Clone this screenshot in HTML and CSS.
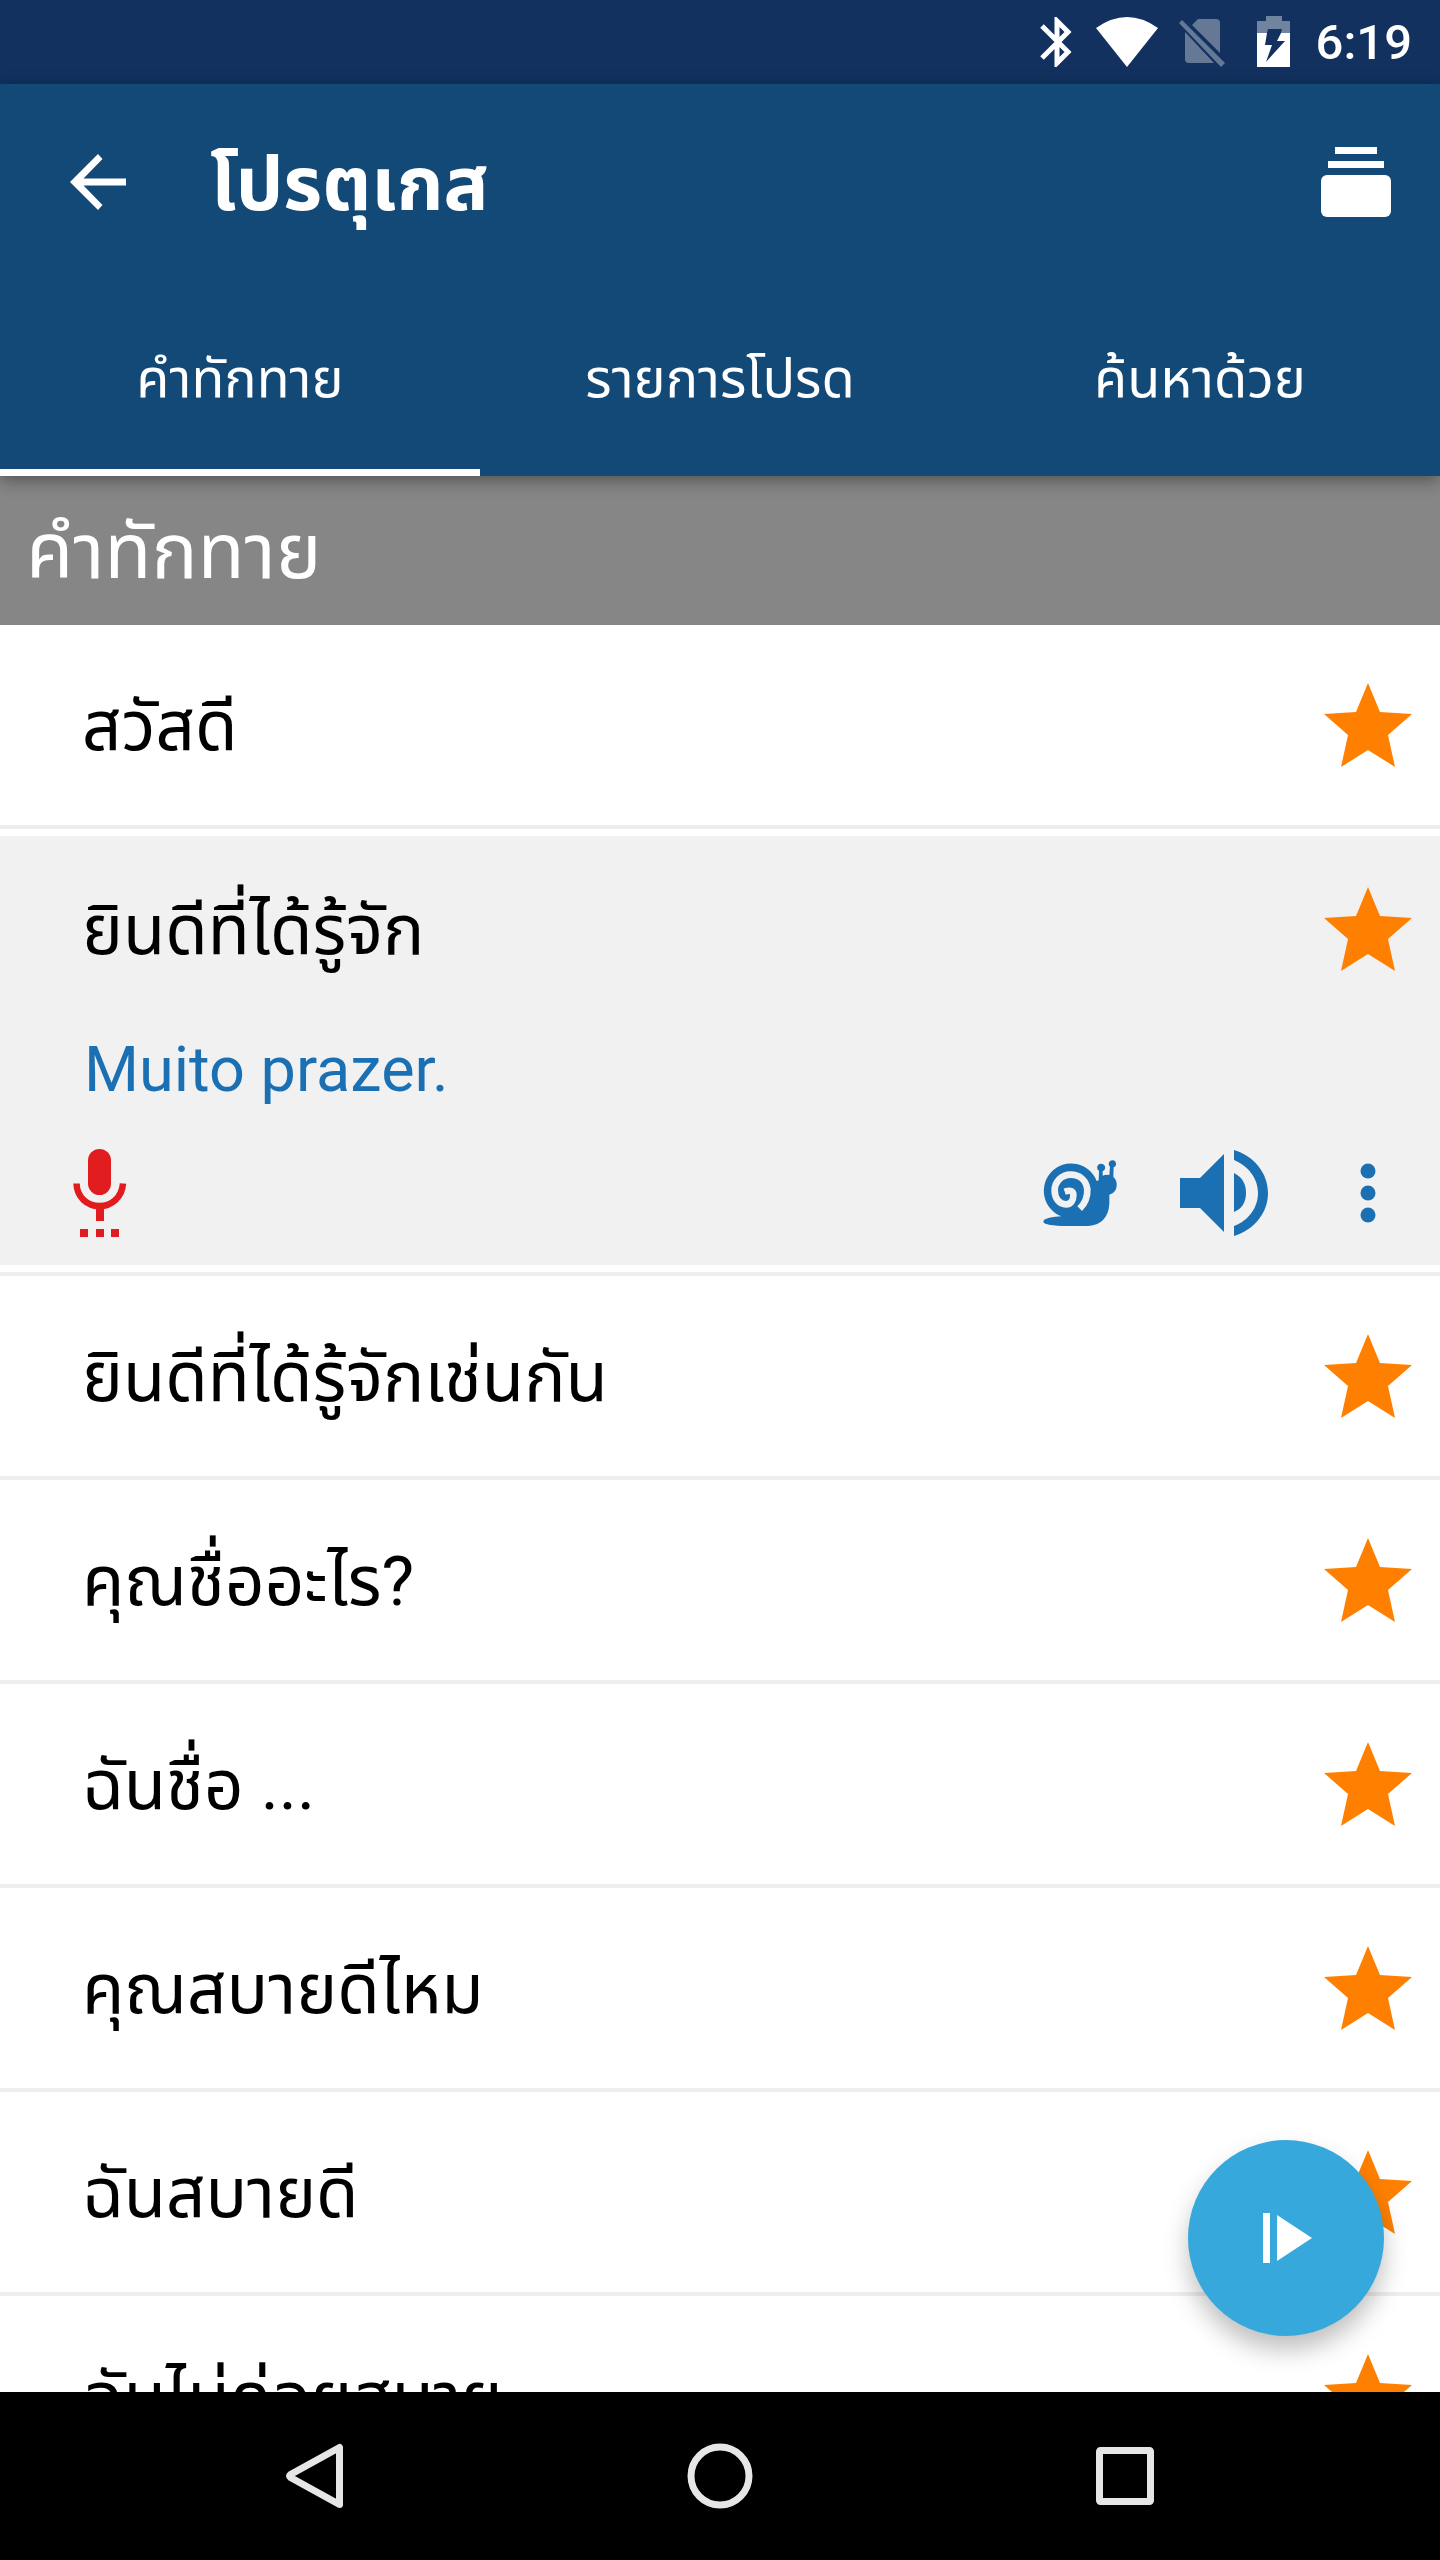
FILE: index.html
```html
<!DOCTYPE html>
<html lang="th">
<head>
<meta charset="utf-8">
<meta name="viewport" content="width=device-width, initial-scale=1">
<title>โปรตุเกส</title>
<link rel="stylesheet" href="styles.css">
</head>
<body>
<svg class="sprite" aria-hidden="true">
  <symbol id="star" viewBox="0 0 88 84">
    <path d="M44 0 56 29 88 31 64 52 71 84 44 67 17 84 24 52 0 31 32 29Z"/>
  </symbol>
</svg>
<div class="app">
  <div class="status">
    <svg class="bluetooth" width="32" height="50" viewBox="0 0 32 50" aria-hidden="true"><path d="M2 9 28 35 17 46V4L28 15 2 41" fill="none" stroke="currentColor" stroke-width="5"/></svg>
    <svg class="wifi" width="62" height="50" viewBox="0 0 62 50" aria-hidden="true"><path d="M0 11Q31-11 62 11L31 50Z"/></svg>
    <svg class="sim" width="46" height="50" viewBox="0 0 46 50" aria-hidden="true"><path d="M0 6 3 3 46 46 42 50Z M6 15 35 46H10Q6 46 6 42Z M13 8 19 2H37Q41 2 41 6V36Z"/></svg>
    <svg class="battery" width="34" height="52" viewBox="0 0 34 52" aria-hidden="true"><path opacity=".4" d="M9 0H25V5H33V17H24L25 13H11L10 17H0V5H9Z"/><path d="M0 17H10L8 29H15L9 46 28 25H20L24 17H33V51H0Z"/></svg>
    <time class="clock">6:19</time>
  </div>

  <header class="header">
    <div class="toolbar">
      <button class="icon-button" type="button" aria-label="กลับ"><svg width="56" height="56" viewBox="0 0 56 56"><path d="M56 24.500V31.500H13.500L32.500 51 28 56 0 28 28 0 32.500 5 13.500 24.500Z"/></svg></button>
      <h1 class="title">โปรตุเกส</h1>
      <button class="icon-button" type="button" aria-label="ชุดบัตรคำ"><svg width="70" height="70" viewBox="0 0 70 70"><path d="M14 0H56V7H14ZM7 14H63V21H7Z"/><rect y="28" width="70" height="42" rx="6"/></svg></button>
    </div>
    <nav class="tabs">
      <a class="tab tab-active" href="#greetings" aria-current="page">คำทักทาย</a>
      <a class="tab" href="#favorites">รายการโปรด</a>
      <a class="tab" href="#search">ค้นหาด้วย</a>
    </nav>
  </header>

  <main class="content" id="greetings">
    <h2 class="section">คำทักทาย</h2>
    <ul class="phrases">
      <li class="row"><div class="line"><button class="phrase" type="button">สวัสดี</button><button class="star" type="button" aria-label="รายการโปรด"><svg width="88" height="84"><use href="#star"/></svg></button></div></li>
      <li class="row row-open">
        <div class="detail">
          <div class="line"><button class="phrase" type="button" aria-expanded="true">ยินดีที่ได้รู้จัก</button><button class="star" type="button" aria-label="รายการโปรด"><svg width="88" height="84"><use href="#star"/></svg></button></div>
          <p class="translation" lang="pt">Muito prazer.</p>
          <div class="actions">
            <button class="record" type="button" aria-label="บันทึกเสียง"><svg width="54" height="88" viewBox="0 0 54 88"><rect x="15" width="23" height="46" rx="11.500"/><path d="M3.500 34.500C4 48 14 57 26.500 57S49 48 50 34.500" fill="none" stroke="currentColor" stroke-width="6.500"/><path d="M23 58H31V72H23ZM7 80H15V88H7ZM23 80H31V88H23ZM38 80H46V88H38Z"/></svg></button>
            <button class="slow" type="button" aria-label="เล่นช้า"><svg width="74" height="66" viewBox="129 180 222 198"><path d="M130 365C131 354 160 351 184 349A82 82 0 1 1 290 243L296 241 297 213A12 12 0 1 1 308 214V227Q317 223 328 225L330 200A11 11 0 1 1 341 202L340 231Q351 240 350 256C350 271 340 281 328 284V310C327 350 305 376 265 378H200C160 377 131 374 130 365Z"/><path d="M239 326C258 307 263 288 262 268C258 240 238 224 212 224C184 224 164 246 164 271C164 296 178 313 198 313C214 313 220 300 220 286C220 273 212 269 194 275" class="snail-spiral"/></svg></button>
            <button class="play" type="button" aria-label="เล่นเสียง"><svg width="88" height="86" viewBox="0 0 88 86"><path d="M0 28H20L44 4V82L20 58H0ZM54 23Q66 29 66 43T54 62ZM54 0C74 6 88 23 88 43S74 80 54 86V76C68 71 78 58 78 43S68 16 54 10Z"/></svg></button>
            <button class="more" type="button" aria-label="เพิ่มเติม"><svg width="16" height="60" viewBox="0 0 16 60"><circle cx="8" cy="8" r="7.500"/><circle cx="8" cy="30" r="7.500"/><circle cx="8" cy="52" r="7.500"/></svg></button>
          </div>
        </div>
      </li>
      <li class="row"><div class="line"><button class="phrase" type="button">ยินดีที่ได้รู้จักเช่นกัน</button><button class="star" type="button" aria-label="รายการโปรด"><svg width="88" height="84"><use href="#star"/></svg></button></div></li>
      <li class="row"><div class="line"><button class="phrase" type="button">คุณชื่ออะไร?</button><button class="star" type="button" aria-label="รายการโปรด"><svg width="88" height="84"><use href="#star"/></svg></button></div></li>
      <li class="row"><div class="line"><button class="phrase" type="button">ฉันชื่อ ...</button><button class="star" type="button" aria-label="รายการโปรด"><svg width="88" height="84"><use href="#star"/></svg></button></div></li>
      <li class="row"><div class="line"><button class="phrase" type="button">คุณสบายดีไหม</button><button class="star" type="button" aria-label="รายการโปรด"><svg width="88" height="84"><use href="#star"/></svg></button></div></li>
      <li class="row"><div class="line"><button class="phrase" type="button">ฉันสบายดี</button><button class="star" type="button" aria-label="รายการโปรด"><svg width="88" height="84"><use href="#star"/></svg></button></div></li>
      <li class="row"><div class="line"><button class="phrase" type="button">ฉันไม่ค่อยสบาย</button><button class="star" type="button" aria-label="รายการโปรด"><svg width="88" height="84"><use href="#star"/></svg></button></div></li>
    </ul>
    <button class="fab" type="button" aria-label="เล่นทั้งหมด"><svg width="50" height="50" viewBox="0 0 50 50"><path d="M0 0H7V50H0ZM14 2 49 25 14 48Z"/></svg></button>
  </main>

  <nav class="system">
    <button type="button" aria-label="ย้อนกลับ"><svg width="58" height="66" viewBox="0 0 58 66"><path d="M53.500 4.500V61.500L4.500 34.500Q2.500 33 4.500 31.500Z"/></svg></button>
    <button type="button" aria-label="หน้าหลัก"><svg width="66" height="66" viewBox="0 0 66 66"><circle cx="33" cy="33" r="29"/></svg></button>
    <button type="button" aria-label="แอปล่าสุด"><svg width="58" height="58" viewBox="0 0 58 58"><rect x="3.500" y="3.500" width="51" height="51" rx="1"/></svg></button>
  </nav>
</div>
</body>
</html>
```
FILE: styles.css
```css
* {
  box-sizing: border-box;
}

body,
h1,
h2,
p,
ul {
  margin: 0;
  padding: 0;
}

body {
  font-family: Roboto, "Noto Sans Thai", "Noto Sans", sans-serif;
  background: #fff;
}

button {
  display: flex;
  align-items: center;
  justify-content: center;
  padding: 0;
  border: 0;
  background: none;
  color: inherit;
  font: inherit;
}

svg {
  display: block;
  flex: none;
  fill: currentColor;
}

.sprite {
  position: absolute;
  width: 0;
  height: 0;
}

.app {
  display: flex;
  flex-direction: column;
  height: 100vh;
}

.status {
  display: flex;
  flex: none;
  align-items: center;
  justify-content: flex-end;
  height: 84px;
  padding-right: 28px;
  background: #12315f;
  color: #fff;
}

.wifi {
  margin-left: 24px;
}

.sim {
  margin-left: 21px;
  opacity: .35;
}

.battery {
  margin-left: 32px;
}

.clock {
  padding-top: 2px;
  margin-left: 25px;
  font-size: 49px;
  font-weight: 500;
  line-height: 84px;
}

.header {
  position: relative;
  z-index: 1;
  flex: none;
  background: #134977;
  box-shadow: 0 4px 16px rgba(0, 0, 0, .4);
  color: #fff;
}

.toolbar {
  display: flex;
  align-items: center;
  height: 196px;
  padding: 0 49px 0 70px;
}

.title {
  flex: 1;
  padding: 4px 0 0 84px;
  font-size: 75px;
  font-weight: 700;
  line-height: 96px;
}

.tabs {
  display: grid;
  grid-template-columns: repeat(3, 1fr);
  height: 196px;
}

.tab {
  display: flex;
  align-items: center;
  justify-content: center;
  padding-top: 12px;
  border-bottom: 7px solid transparent;
  color: #fff;
  font-size: 54px;
  text-decoration: none;
}

.tab-active {
  border-color: #fff;
}

.content {
  position: relative;
  flex: 1;
  min-height: 0;
  overflow: hidden;
}

.section {
  padding: 4px 0 0 26px;
  background: #868686;
  color: #fff;
  font-size: 77px;
  font-weight: 400;
  line-height: 145px;
}

.phrases {
  list-style: none;
}

.row {
  border-bottom: 4px solid #eee;
}

.row-open {
  padding: 7px 0;
}

.line {
  display: flex;
  align-items: center;
  height: 200px;
  padding: 0 28px 0 82px;
}

.phrase {
  flex: 1;
  justify-content: flex-start;
  padding-top: 4px;
  color: #000;
  font-size: 69px;
  line-height: 96px;
  text-align: left;
}

.star {
  color: #ff8000;
}

.detail {
  background: #f1f1f1;
}

.detail .line {
  height: 186px;
}

.translation {
  padding: 4px 0 0 84px;
  color: #1b70b3;
  font-size: 63px;
  line-height: 88px;
}

.actions {
  display: flex;
  align-items: center;
  padding: 35px 64px 28px 73px;
  color: #1b70b3;
}

.record {
  margin-right: auto;
  color: #e01c1e;
}

.play {
  margin: 0 92px 0 63px;
}

.snail-spiral {
  fill: none;
  stroke: #f1f1f1;
  stroke-width: 20px;
}

.fab {
  position: absolute;
  right: 56px;
  bottom: 56px;
  width: 196px;
  height: 196px;
  padding-left: 4px;
  border-radius: 50%;
  background: #36a8db;
  box-shadow: 0 14px 24px rgba(0, 0, 0, .25);
  color: #fff;
}

.system {
  display: grid;
  flex: none;
  grid-template-columns: repeat(3, 1fr);
  height: 168px;
  padding: 0 112px;
  background: #000;
  color: #e6e6e6;
}

.system svg {
  fill: none;
  stroke: currentColor;
  stroke-width: 7px;
  stroke-linejoin: round;
}
```
